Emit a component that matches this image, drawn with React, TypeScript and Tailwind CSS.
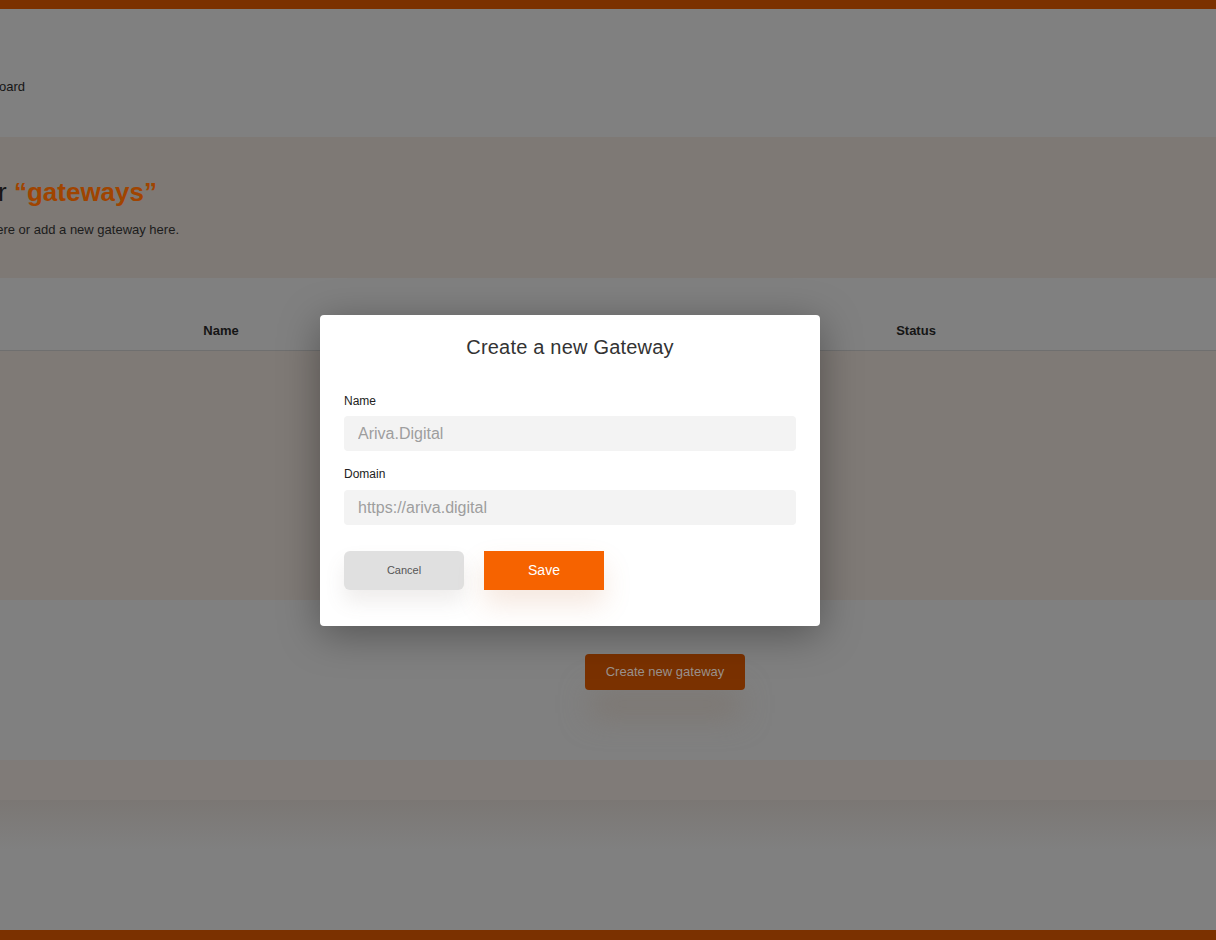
import React from "react";

export default function App() {
  return (
    <div className="relative w-[1216px] h-[940px] overflow-hidden bg-[#808080] font-['Liberation_Sans',Arial,sans-serif]">
      {/* Dimmed page underneath the dialog */}
      <div className="flex flex-col h-full">
        <div className="h-[9px] bg-[#7b3100]" />
        <header className="h-[128px] flex items-center">
          <div className="w-[25px] flex justify-end whitespace-nowrap text-[13px] text-[#151515] pt-[27px]">
            Dashboard
          </div>
        </header>
        <section className="h-[141px] bg-[#7e7975] flex flex-col pt-[38px]">
          <div className="w-[157px] flex justify-end whitespace-nowrap text-[26px] leading-[34px] font-normal text-[#161616]">
            <span>
              Your <span className="font-semibold text-[#a04400]">“gateways”</span>
            </span>
          </div>
          <div className="w-[179px] flex justify-end whitespace-nowrap text-[13px] leading-[18px] text-[#1c1c1c] mt-[12px]">
            Manage your gateways here or add a new gateway here.
          </div>
        </section>
        <div className="h-[73px] grid grid-cols-[442px_174px_600px] items-end pb-[10px] border-b border-[#6f6f6f] text-[13px] font-bold text-[#151515]">
          <div className="text-center">Name</div>
          <div className="text-center">Domain</div>
          <div className="text-center">Status</div>
        </div>
        <div className="h-[249px] bg-[#7f7a76]" />
        <div className="h-[160px] flex justify-end pr-[471px] pt-[54px]">
          <button className="h-[36px] w-[160px] rounded bg-[#7a3100] text-[13px] text-[#9a928d] shadow-[0_32px_30px_-6px_rgba(124,116,110,0.9)]">
            Create new gateway
          </button>
        </div>
        <div className="h-[40px] bg-[#807b78]" />
        <div className="h-[50px] bg-gradient-to-b from-[#7b7774] to-[#808080]" />
        <div className="flex-1" />
        <div className="h-[10px] bg-[#7b3100]" />
      </div>

      {/* Dialog */}
      <div className="absolute left-[320px] top-[315px] w-[500px] h-[311px] rounded bg-white shadow-[0_8px_40px_rgba(0,0,0,0.35)] px-[24px] pt-[19px]">
        <h2 className="text-center text-[20px] leading-[26px] tracking-[0.2px] text-[#333333]">Create a new Gateway</h2>
        <label className="block mt-[33px] text-[12px] leading-[16px] text-[#222222]">Name</label>
        <input
          className="mt-[7px] block w-[452px] h-[35px] rounded bg-[#f3f3f3] px-[14px] text-[16px] text-[#333] placeholder:text-[#9e9e9e] outline-none"
          placeholder="Ariva.Digital"
        />
        <label className="block mt-[15px] text-[12px] leading-[16px] text-[#222222]">Domain</label>
        <input
          className="mt-[8px] block w-[452px] h-[35px] rounded bg-[#f3f3f3] px-[14px] text-[16px] text-[#333] placeholder:text-[#9e9e9e] outline-none"
          placeholder="https://ariva.digital"
        />
        <div className="flex gap-[20px] mt-[26px]">
          <button className="w-[120px] h-[39px] rounded-md bg-[#e0e0e0] text-[11px] text-[#555555] shadow-[0_12px_20px_rgba(120,110,100,0.12)]">
            Cancel
          </button>
          <button className="w-[120px] h-[39px] bg-[#f66300] text-[14px] text-white shadow-[0_14px_28px_rgba(200,120,70,0.18)]">
            Save
          </button>
        </div>
      </div>
    </div>
  );
}
